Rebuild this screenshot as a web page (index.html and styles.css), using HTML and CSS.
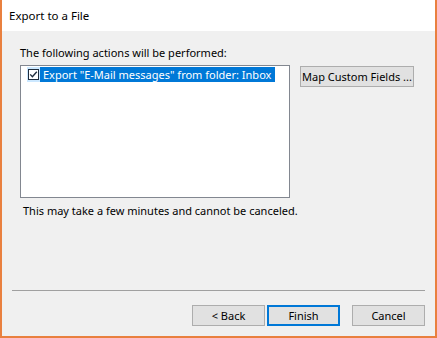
FILE: index.html
```html
<!DOCTYPE html>
<html>
<head>
<meta charset="utf-8">
<link rel="stylesheet" href="styles.css">
</head>
<body>
<div class="window">
  <div class="titlebar">Export to a File</div>
  <div class="content">
    <div class="label">The following actions will be performed:</div>
    <div class="row">
      <div class="listbox">
        <div class="item">
          <span class="chk-wrap">
            <svg class="chk" width="11" height="11" viewBox="0 0 11 11">
              <rect x="0.5" y="0.5" width="10" height="10" fill="#ffffff" stroke="#1f2d3d"/>
              <path d="M2.2 5.4 L4.4 7.8 L8.8 2.8" fill="none" stroke="#1f2d3d" stroke-width="1.4"/>
            </svg>
          </span>
          <span class="item-text">Export "E-Mail messages" from folder: Inbox</span>
        </div>
      </div>
      <button class="btn map">Map Custom Fields ...</button>
    </div>
    <div class="hint">This may take a few minutes and cannot be canceled.</div>
    <div class="spacer"></div>
    <div class="sep"></div>
    <div class="buttons">
      <button class="btn nav">&lt; Back</button>
      <button class="btn nav default">Finish</button>
      <button class="btn nav cancel">Cancel</button>
    </div>
  </div>
</div>
</body>
</html>
```
FILE: styles.css
```css
html, body {
  margin: 0;
  padding: 0;
}
body {
  width: 437px;
  height: 338px;
  overflow: hidden;
  font-family: "Noto Sans", "Open Sans", sans-serif;
  font-size: 11px;
  color: #000;
}
.window {
  box-sizing: border-box;
  width: 437px;
  height: 338px;
  border-left: 2px solid #e9803f;
  border-right: 2px solid #e9803f;
  border-bottom: 2px solid #e9803f;
  display: flex;
  flex-direction: column;
  background: #f0f0f0;
}
.titlebar {
  height: 31px;
  background: #ffffff;
  padding-left: 7px;
  font-size: 11.5px;
  box-sizing: border-box;
  padding-top: 2px;
  line-height: 28px;
}
.content {
  flex: 1;
  display: flex;
  flex-direction: column;
  padding: 0 10px 0 10px;
}
.label {
  margin-left: 8px;
  margin-top: 14px;
  height: 16px;
  line-height: 16px;
}
.row {
  display: flex;
  margin-top: 4px;
  margin-left: 8px;
  align-items: flex-start;
}
.listbox {
  box-sizing: border-box;
  width: 270px;
  height: 133px;
  background: #fff;
  border: 1px solid #828790;
  padding: 1px 0 0 6px;
}
.item {
  display: flex;
  height: 15px;
  align-items: stretch;
}
.chk-wrap {
  width: 13px;
  background: #cce8ff;
  display: flex;
  align-items: center;
  justify-content: center;
}
.item-text {
  background: #0078d7;
  color: #fff;
  width: 235px;
  line-height: 15px;
  padding-left: 3px;
  box-sizing: border-box;
  white-space: nowrap;
}
.btn {
  font-family: inherit;
  font-size: 11px;
  color: #000;
  background: #e1e1e1;
  border: 1px solid #adadad;
  box-sizing: border-box;
  padding: 0;
  margin: 0;
  white-space: nowrap;
}
.map {
  margin-left: 10px;
  margin-top: 1px;
  width: 114px;
  height: 21px;
}
.hint {
  margin-left: 11px;
  margin-top: 5px;
  line-height: 16px;
}
.spacer {
  flex: 1;
}
.sep {
  height: 1px;
  background: #a0a0a0;
  margin: 0 0 14px 0;
}
.buttons {
  display: flex;
  justify-content: flex-end;
  margin-bottom: 10px;
}
.nav {
  width: 73px;
  height: 21px;
}
.default {
  margin-left: 2px;
  border: 2px solid #0078d7;
}
.cancel {
  margin-left: 12px;
}
```
